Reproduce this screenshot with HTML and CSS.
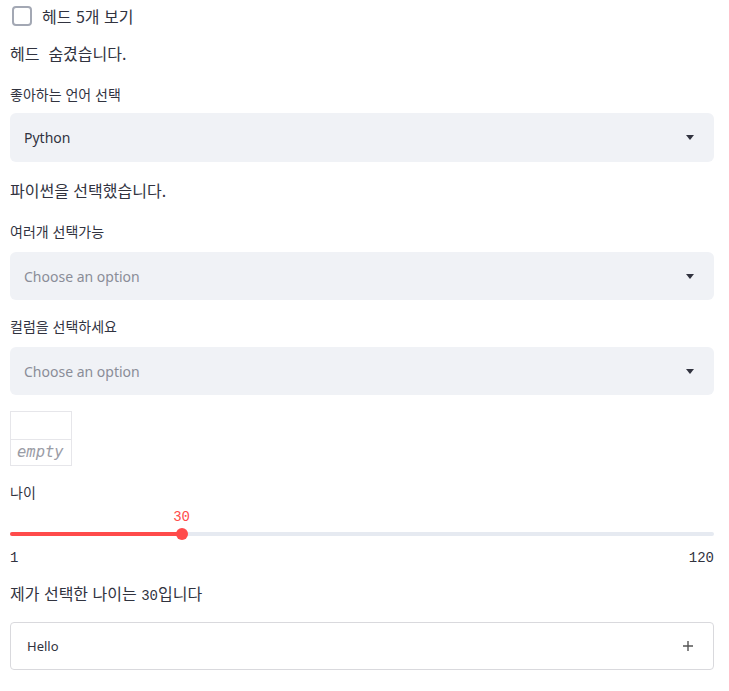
FILE: index.html
```html
<!DOCTYPE html>
<html lang="ko">
<head>
    <meta charset="UTF-8">
    <title>Streamlit app</title>
    <link rel="stylesheet" href="styles.css">
</head>
<body>
    <div class="main">
        <label class="check-row">
            <span class="check-box"></span>
            <span>헤드 5개 보기</span>
        </label>

        <p class="text first">헤드&nbsp;&nbsp;숨겼습니다.</p>

        <div class="widget-label lang-label">좋아하는 언어 선택</div>
        <div class="select tall">
            <span class="value">Python</span>
            <svg class="caret" width="8" height="5" viewBox="0 0 8 5"><path d="M0 0h8L4 5z" fill="#31333f"/></svg>
        </div>

        <p class="text after-select">파이썬을 선택했습니다.</p>

        <div class="widget-label">여러개 선택가능</div>
        <div class="select">
            <span class="placeholder">Choose an option</span>
            <svg class="caret" width="8" height="5" viewBox="0 0 8 5"><path d="M0 0h8L4 5z" fill="#31333f"/></svg>
        </div>

        <div class="widget-label spaced">컬럼을 선택하세요</div>
        <div class="select">
            <span class="placeholder">Choose an option</span>
            <svg class="caret" width="8" height="5" viewBox="0 0 8 5"><path d="M0 0h8L4 5z" fill="#31333f"/></svg>
        </div>

        <div class="frame">
            <div class="frame-head"></div>
            <div class="frame-cell">empty</div>
        </div>

        <div class="widget-label spaced">나이</div>
        <div class="slider">
            <div class="slider-top">
                <span class="slider-value" style="left: 24.37%">30</span>
            </div>
            <div class="track">
                <div class="track-fill" style="width: 24.37%"></div>
                <span class="thumb" style="left: 24.37%"></span>
            </div>
            <div class="ticks">
                <span>1</span>
                <span>120</span>
            </div>
        </div>

        <p class="text age">제가 선택한 나이는 <code>30</code>입니다</p>

        <div class="expander">
            <span>Hello</span>
            <svg width="10" height="10" viewBox="0 0 10 10"><path d="M5 0v10M0 5h10" stroke="#555" stroke-width="1.4"/></svg>
        </div>
    </div>
</body>
</html>
```

FILE: styles.css
```css
body {
    margin: 0;
    background: #ffffff;
    color: #31333f;
    font-family: "Noto Sans", "Noto Sans CJK KR", sans-serif;
}

.main {
    width: 704px;
    padding: 0 10px;
}

.check-row {
    display: flex;
    align-items: center;
    height: 32px;
    font-size: 16px;
    font-family: "Noto Sans CJK KR", sans-serif;
}

.check-box {
    width: 16px;
    height: 16px;
    border: 2px solid #a3a8b4;
    border-radius: 4px;
    margin-left: 2px;
    margin-right: 10px;
}

.text {
    margin: 16px 0 0;
    font-size: 16px;
    line-height: 24px;
    font-family: "Noto Sans CJK KR", sans-serif;
}

.text.first {
    margin-top: 9px;
}

.widget-label {
    margin-top: 19px;
    font-size: 14px;
    line-height: 20px;
    font-family: "Noto Sans CJK KR", sans-serif;
}

.widget-label.spaced {
    margin-top: 16px;
}

.select {
    display: flex;
    align-items: center;
    justify-content: space-between;
    height: 48px;
    margin-top: 11px;
    padding: 0 20px 0 14px;
    background: #f0f2f6;
    border-radius: 6px;
    font-size: 14px;
}

.select.tall {
    height: 49px;
    margin-top: 9px;
}

.placeholder {
    color: #8a8d98;
}

.frame {
    width: 60px;
    height: 53px;
    margin-top: 16px;
    border: 1px solid #e6e6ea;
}

.frame-head {
    height: 27px;
    border-bottom: 1px solid #e6e6ea;
}

.frame-cell {
    padding-left: 6px;
    font-family: "DejaVu Sans Mono", monospace;
    font-style: italic;
    font-size: 15.5px;
    line-height: 25px;
    color: #9a9ca6;
}

.slider {
    padding-top: 7px;
}

.slider-top {
    position: relative;
    height: 16px;
}

.slider-value {
    position: absolute;
    top: 0;
    transform: translateX(-50%);
    color: #ff4b4b;
    font-family: "Liberation Mono", monospace;
    font-size: 14px;
    line-height: 16px;
}

.track {
    position: relative;
    height: 4px;
    margin: 7px 0;
    background: #e6eaf1;
    border-radius: 2px;
}

.track-fill {
    height: 4px;
    background: #ff4b4b;
    border-radius: 2px;
}

.thumb {
    position: absolute;
    top: -4px;
    width: 12px;
    height: 12px;
    margin-left: -6px;
    background: #ff4b4b;
    border-radius: 50%;
}

.ticks {
    display: flex;
    justify-content: space-between;
    margin-top: 14px;
    font-family: "Liberation Mono", monospace;
    font-size: 14px;
    line-height: 16px;
}

.text.age {
    margin-top: 15px;
}

.text code {
    font-family: "Liberation Mono", monospace;
    font-size: 14px;
}

.expander {
    display: flex;
    align-items: center;
    justify-content: space-between;
    height: 46px;
    margin-top: 14px;
    padding: 0 20px 0 16px;
    border: 1px solid #d9d9dd;
    border-radius: 4px;
    font-size: 13px;
}
```
